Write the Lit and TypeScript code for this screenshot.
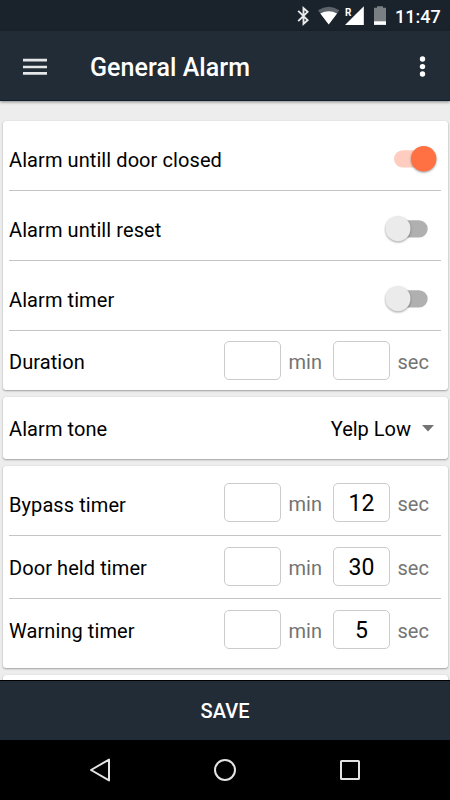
import { LitElement, html, css, svg } from "lit";
import { customElement, property } from "lit/decorators.js";

@customElement("status-bar")
class StatusBar extends LitElement {
  static styles = css`
    :host { display: flex; height: 31px; background: #1a232c; justify-content: flex-end; align-items: center; box-sizing: border-box; padding-right: 10px; color: #fff; }
    .icons { display: block; }
    .time { font: 500 18px/31px Roboto, sans-serif; width: 45px; white-space: nowrap; margin-left: 8px; padding-top: 1px; box-sizing: border-box; height: 31px; }
    .roam { font: 700 10px Roboto, sans-serif; }
  `;
  render() {
    return html`
      <svg class="icons" width="92" height="31" viewBox="295 0 92 31">
        <path d="M298.2 10.8 L307.6 20.2 L303.5 23.8 V8.2 L307.6 11.8 L298.2 21.2" fill="none" stroke="#e8eaeb" stroke-width="1.9"/>
        <path d="M318 10.2 Q328.7 3.2 339.4 10.2 L328.7 24.2Z" fill="#5d646b"/>
        <path d="M320.3 13.6 Q328.7 8.7 337.1 13.6 L328.7 24.4Z" fill="#fff"/>
        <path d="M363.8 6.3 V25 H345Z" fill="#fff"/>
        <text class="roam" x="345" y="15.6" fill="#fff">R</text>
        <path d="M374 7.8 H377 V6.2 H383 V7.8 H386 V25 H374Z" fill="#7a7f83"/>
        <path d="M374 21.3 H386 V24.8 H374Z" fill="#fff"/>
      </svg>
      <div class="time">11:47</div>
    `;
  }
}

@customElement("title-bar")
class TitleBar extends LitElement {
  static styles = css`
    :host { display: flex; height: 70px; align-items: center; background: #212c37; border-bottom: 1px solid #10202f; box-sizing: border-box; padding: 2px 19px 0 23px; color: #fff; position: relative; box-shadow: 0 1px 3px rgba(0,0,0,.45); }
    .title { flex: 1; margin-left: 43px; padding-top: 2px; font: 500 25px/30px Roboto, sans-serif; letter-spacing: .06px; }
  `;
  render() {
    return html`
      <svg width="24" height="18" viewBox="0 0 24 18"><path d="M0 2.2H24M0 9H24M0 15.4H24" stroke="#e4e6e8" stroke-width="2.7"/></svg>
      <div class="title">General Alarm</div>
      <svg width="16" height="24" viewBox="0 0 16 24" fill="#fff"><circle cx="7.5" cy="4" r="2.7"/><circle cx="7.5" cy="11.6" r="2.7"/><circle cx="7.5" cy="19" r="2.7"/></svg>
    `;
  }
}

@customElement("toggle-switch")
class ToggleSwitch extends LitElement {
  @property({ type: Boolean }) on = false;
  static styles = css`
    :host { display: block; width: 54px; height: 34px; }
    .knob { filter: drop-shadow(0 1px 1px rgba(0,0,0,.38)); }
  `;
  render() {
    return html`<svg width="54" height="34" viewBox="0 0 54 34">
      ${this.on
        ? svg`<rect x="10" y="8.2" width="39" height="17.4" rx="8.7" fill="#ffcdbf"/><circle class="knob" cx="39.7" cy="16.7" r="12.7" fill="#ff7043"/>`
        : svg`<rect x="5" y="8.2" width="38.7" height="17.4" rx="8.7" fill="#b0b0b0"/><circle class="knob" cx="14" cy="16.7" r="12.5" fill="#ebebeb"/>`}
    </svg>`;
  }
}

@customElement("time-fields")
class TimeFields extends LitElement {
  @property() min = "";
  @property() sec = "";
  static styles = css`
    :host { display: flex; align-items: center; color: #747474; font: 400 20px/24px Roboto, sans-serif; }
    .box { width: 57px; height: 39px; box-sizing: border-box; border: 1px solid #cbcbcb; border-radius: 5px; background: #fff; color: #000; text-align: center; font-size: 23px; line-height: 39px; }
    .unit { padding-top: 3px; margin-left: 7.5px; }
    .min { width: 44.5px; }
    .sec { width: 43px; }
  `;
  render() {
    return html`
      <div class="box">${this.min}</div><div class="unit min">min</div>
      <div class="box">${this.sec}</div><div class="unit sec">sec</div>
    `;
  }
}

@customElement("setting-row")
class SettingRow extends LitElement {
  @property() label = "";
  @property({ type: Boolean }) divided = false;
  static styles = css`
    :host { display: block; box-sizing: border-box; }
    .row { display: flex; height: 100%; box-sizing: border-box; margin: 0 7px 0 6.5px; align-items: center; justify-content: space-between; }
    .divided { border-bottom: 1px solid #c4c4c4; }
    .label { font: 400 20px/24px Roboto, sans-serif; color: #000; white-space: nowrap; letter-spacing: .08px; padding-top: var(--label-top, 1px); padding-bottom: var(--label-bottom, 0px); }
  `;
  render() {
    return html`<div class="row ${this.divided ? "divided" : ""}">
      <div class="label">${this.label}</div><slot></slot>
    </div>`;
  }
}

@customElement("nav-bar")
class NavBar extends LitElement {
  static styles = css`
    :host { display: flex; height: 60px; background: #000; justify-content: space-between; align-items: center; padding: 0 88px; }
  `;
  render() {
    return html`
      <svg width="24" height="26" fill="none" stroke="#e3e3e3" stroke-width="2" stroke-linejoin="round"><path d="M3 13 L21 2.6 V23.4Z"/></svg>
      <svg width="26" height="26" fill="none" stroke="#e3e3e3" stroke-width="2"><circle cx="13" cy="13" r="10"/></svg>
      <svg width="24" height="26" fill="none" stroke="#e3e3e3" stroke-width="2"><rect x="3" y="4" width="18" height="18" rx=".6"/></svg>
    `;
  }
}

@customElement("app-root")
class AppRoot extends LitElement {
  static styles = css`
    :host { display: flex; flex-direction: column; width: 450px; height: 800px; overflow: hidden; background: #ededed; font-family: Roboto, sans-serif; }
    .content { flex: 1; min-height: 0; overflow: hidden; box-sizing: border-box; padding: 20px 2.5px 0; display: flex; flex-direction: column; gap: 7px; }
    .card { flex: none; background: #fff; border-radius: 3px; box-shadow: 0 1px 2px rgba(0,0,0,.32), 0 0 1px rgba(0,0,0,.12); }
    .switches { height: 269px; }
    .tone { height: 62px; }
    .timers { height: 202px; }
    .h70 { height: 70px; }
    .h62 { height: 62px; }
    .h63 { height: 63px; }
    .toggle-row { padding-top: 6px; --label-top: 3px; }
    .choice { display: flex; align-items: center; gap: 11px; margin-right: 6.5px; padding-top: 1px; font: 400 20px/24px Roboto, sans-serif; color: #000; }
    toggle-switch { margin-right: 3px; }
    .bypass { padding-top: 6px; --label-top: 3px; }
    .bypass time-fields { margin-bottom: 2px; }
    .held time-fields { margin-bottom: 1px; }
    .duration { --label-top: 0px; --label-bottom: 1px; }
    .duration time-fields { margin-bottom: 3px; }
    .warning time-fields { margin-bottom: 2px; }
    .save { height: 60px; box-sizing: border-box; border-top: 1px solid #000; background: #212c37; color: #fff; text-align: center; font: 500 20px/60px Roboto, sans-serif; letter-spacing: .05px; }
  `;
  render() {
    return html`
      <status-bar></status-bar>
      <title-bar></title-bar>
      <div class="content">
        <div class="card switches">
          <setting-row class="h70 toggle-row" label="Alarm untill door closed" divided><toggle-switch on></toggle-switch></setting-row>
          <setting-row class="h70 toggle-row" label="Alarm untill reset" divided><toggle-switch></toggle-switch></setting-row>
          <setting-row class="h70 toggle-row" label="Alarm timer" divided><toggle-switch></toggle-switch></setting-row>
          <setting-row class="h62 duration" label="Duration"><time-fields></time-fields></setting-row>
        </div>
        <div class="card tone">
          <setting-row class="h62" label="Alarm tone">
            <div class="choice">Yelp Low <svg width="12" height="7"><path d="M0 0H12L6 6.4Z" fill="#737373"/></svg></div>
          </setting-row>
        </div>
        <div class="card timers">
          <setting-row class="h70 bypass" label="Bypass timer" divided><time-fields sec="12"></time-fields></setting-row>
          <setting-row class="h63 held" label="Door held timer" divided><time-fields sec="30"></time-fields></setting-row>
          <setting-row class="h63 warning" label="Warning timer"><time-fields sec="5"></time-fields></setting-row>
        </div>
        <div class="card h62"></div>
      </div>
      <div class="save">SAVE</div>
      <nav-bar></nav-bar>
    `;
  }
}
